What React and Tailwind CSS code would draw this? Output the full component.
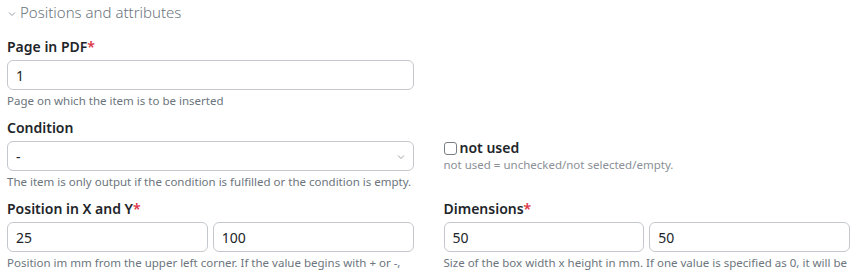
import React from "react";

const Req = () => <span className="text-[#dc3545]">*</span>;

const Field = ({ label, required, children, help }) => (
  <div className="flex flex-col">
    <label className="text-[14px] font-semibold text-[#212529] leading-[20px] mb-[3px]">
      {label}
      {required && <Req />}
    </label>
    {children}
    <div className="text-[11.5px] text-[#6c757d] leading-[14px] mt-[4px] whitespace-nowrap">
      {help}
    </div>
  </div>
);

const Input = ({ value }) => (
  <input
    defaultValue={value}
    className="w-full h-[30px] rounded-[6px] border border-[#c4c8cc] bg-white px-[8px] text-[14px] text-[#212529] outline-none"
  />
);

export default function App() {
  return (
    <div className="w-[857px] h-[273px] overflow-hidden bg-white font-['Noto_Sans',sans-serif] px-[7px]">
      {/* Section header */}
      <div className="flex items-center gap-[4px] h-[25px] pl-[1px]">
        <svg width="8" height="8" viewBox="0 0 8 8" className="mt-[2px]">
          <path d="M1 2.5 L4 5.5 L7 2.5" fill="none" stroke="#9aa0a6" strokeWidth="1" />
        </svg>
        <span className="text-[15px] font-light text-[#6c757d]">Positions and attributes</span>
      </div>

      <div className="grid grid-cols-2 gap-x-[30px] mt-[12px]">
        <Field label="Page in PDF" required help="Page on which the item is to be inserted">
          <Input value="1" />
        </Field>
        <div />

        <div className="mt-[10px]">
          <Field
            label="Condition"
            help="The item is only output if the condition is fulfilled or the condition is empty."
          >
            <div className="relative">
              <select className="w-full h-[30px] rounded-[6px] border border-[#c4c8cc] bg-white px-[8px] text-[14px] text-[#212529] appearance-none outline-none">
                <option>-</option>
              </select>
              <svg width="8" height="8" viewBox="0 0 8 8" className="absolute right-[9px] top-[12px]">
                <path d="M1 2.5 L4 5.5 L7 2.5" fill="none" stroke="#9aa0a6" strokeWidth="1" />
              </svg>
            </div>
          </Field>
        </div>
        <div className="pt-[32px] flex flex-col">
          <label className="flex items-center gap-[3px] text-[14px] font-semibold text-[#212529] leading-[16px]">
            <span className="w-[13px] h-[13px] border border-[#7a7f85] rounded-[3px] bg-white inline-block" />
            not used
          </label>
          <div className="text-[11.5px] text-[#8a9096] leading-[14px] mt-[2px]">
            not used = unchecked/not selected/empty.
          </div>
        </div>

        <div className="mt-[10px]">
          <Field
            label="Position in X and Y"
            required
            help="Position im mm from the upper left corner. If the value begins with + or -,"
          >
            <div className="flex gap-[5px]">
              <Input value="25" />
              <Input value="100" />
            </div>
          </Field>
        </div>
        <div className="mt-[10px]">
          <Field
            label="Dimensions"
            required
            help="Size of the box width x height in mm. If one value is specified as 0, it will be"
          >
            <div className="flex gap-[5px]">
              <Input value="50" />
              <Input value="50" />
            </div>
          </Field>
        </div>
      </div>
    </div>
  );
}
